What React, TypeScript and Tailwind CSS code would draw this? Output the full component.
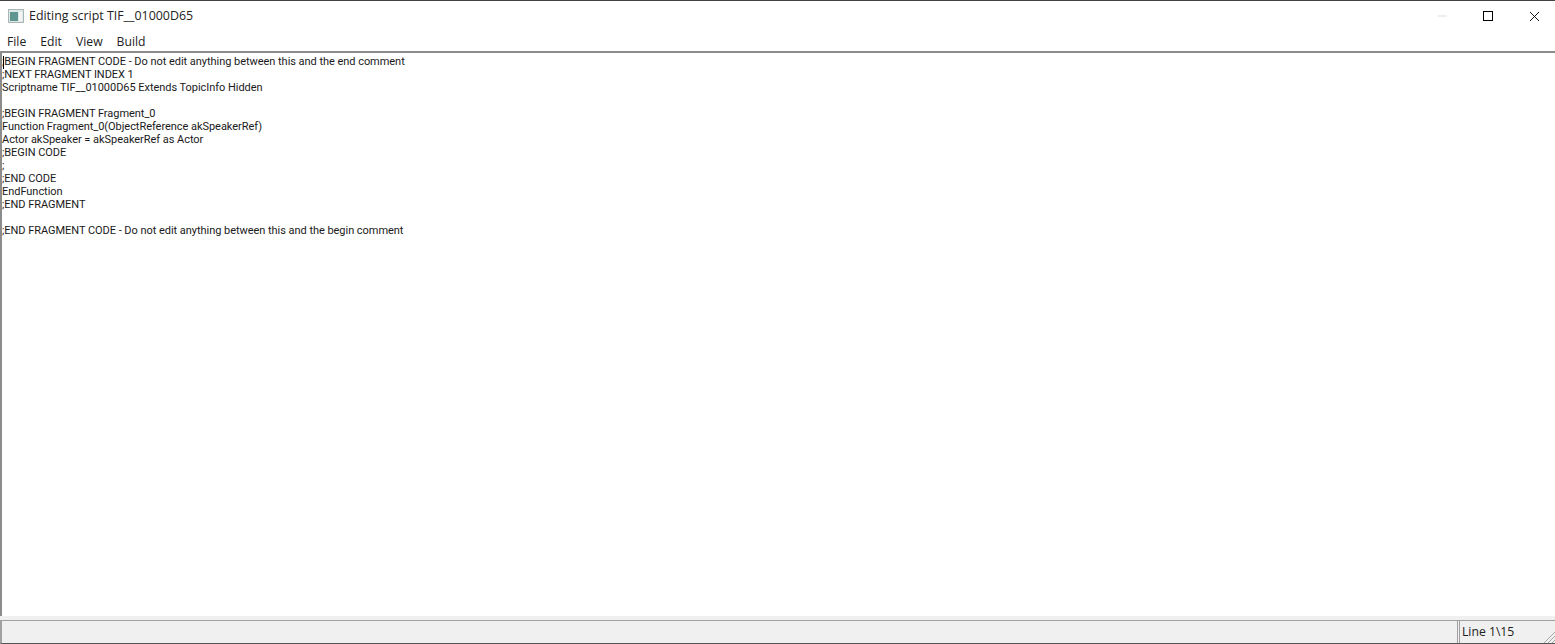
import React from "react";
import { X, Minus } from "lucide-react";

const menus = ["File", "Edit", "View", "Build"];

const script = `;BEGIN FRAGMENT CODE - Do not edit anything between this and the end comment
;NEXT FRAGMENT INDEX 1
Scriptname TIF__01000D65 Extends TopicInfo Hidden

;BEGIN FRAGMENT Fragment_0
Function Fragment_0(ObjectReference akSpeakerRef)
Actor akSpeaker = akSpeakerRef as Actor
;BEGIN CODE
;
;END CODE
EndFunction
;END FRAGMENT

;END FRAGMENT CODE - Do not edit anything between this and the begin comment`;

function AppIcon() {
  return (
    <svg width="16" height="14" viewBox="0 0 16 14" className="shrink-0">
      <rect x="0.5" y="0.5" width="15" height="13" fill="#dfe8e8" stroke="#a9b6b6" />
      <rect x="2" y="3" width="8" height="9" fill="#5f9690" />
      <rect x="11" y="3" width="3" height="9" fill="#f4f6f6" />
    </svg>
  );
}

export default function App() {
  return (
    <div className="w-[1555px] h-[644px] flex flex-col bg-white overflow-hidden font-['Open_Sans',sans-serif] text-black">
      <div className="h-px bg-[#444444]" />
      {/* title bar */}
      <div className="h-[30px] flex items-center pl-2 shrink-0">
        <AppIcon />
        <span className="ml-[5px] text-[12.4px] text-[#222222]">Editing script TIF__01000D65</span>
        <div className="ml-auto flex items-center">
          <Minus size={14} strokeWidth={1} className="text-[#c8c8c8] mr-[34px]" />
          <div className="w-[10px] h-[10px] border border-black mr-[33px]" />
          <X size={17} strokeWidth={1.3} className="mr-[12px]" />
        </div>
      </div>
      {/* menu */}
      <div className="h-[20px] flex items-center gap-[14px] pl-[7px] pt-[2px] text-[12.2px] shrink-0 text-[#222222]">
        {menus.map((m) => (
          <span key={m}>{m}</span>
        ))}
      </div>
      {/* editor */}
      <div className="flex-1 border-t-2 border-t-[#8c8c8c] border-l-2 border-l-[#8c8c8c] bg-white relative min-h-0">
        <pre className="pt-[2px] text-[11px] tracking-[-0.04px] leading-[13px] font-['Roboto',sans-serif] text-[#1a1a1a]">{script}</pre>
        <div className="absolute left-px top-[3px] w-px h-[13px] bg-black" />
      </div>
      {/* status bar */}
      <div className="h-[28px] shrink-0 flex flex-col bg-[#f0f0f0] pt-[4px]">
        <div className="flex-1 flex border-t border-t-[#a0a0a0] border-b border-b-[#555555] border-l-2 border-l-[#a0a0a0]">
          <div className="flex-1 border-r border-r-[#a0a0a0]" />
          <div className="w-[96px] ml-[1px] border-l border-l-[#a0a0a0] flex items-center pl-[2px] relative">
            <span className="text-[12.2px] text-[#222222]">Line 1\15</span>
            <svg width="12" height="12" viewBox="0 0 12 12" className="absolute right-0 bottom-0">
              <path d="M12 1L1 12M12 5L5 12M12 9L9 12" stroke="#a8a8a8" />
            </svg>
          </div>
        </div>
      </div>
    </div>
  );
}
